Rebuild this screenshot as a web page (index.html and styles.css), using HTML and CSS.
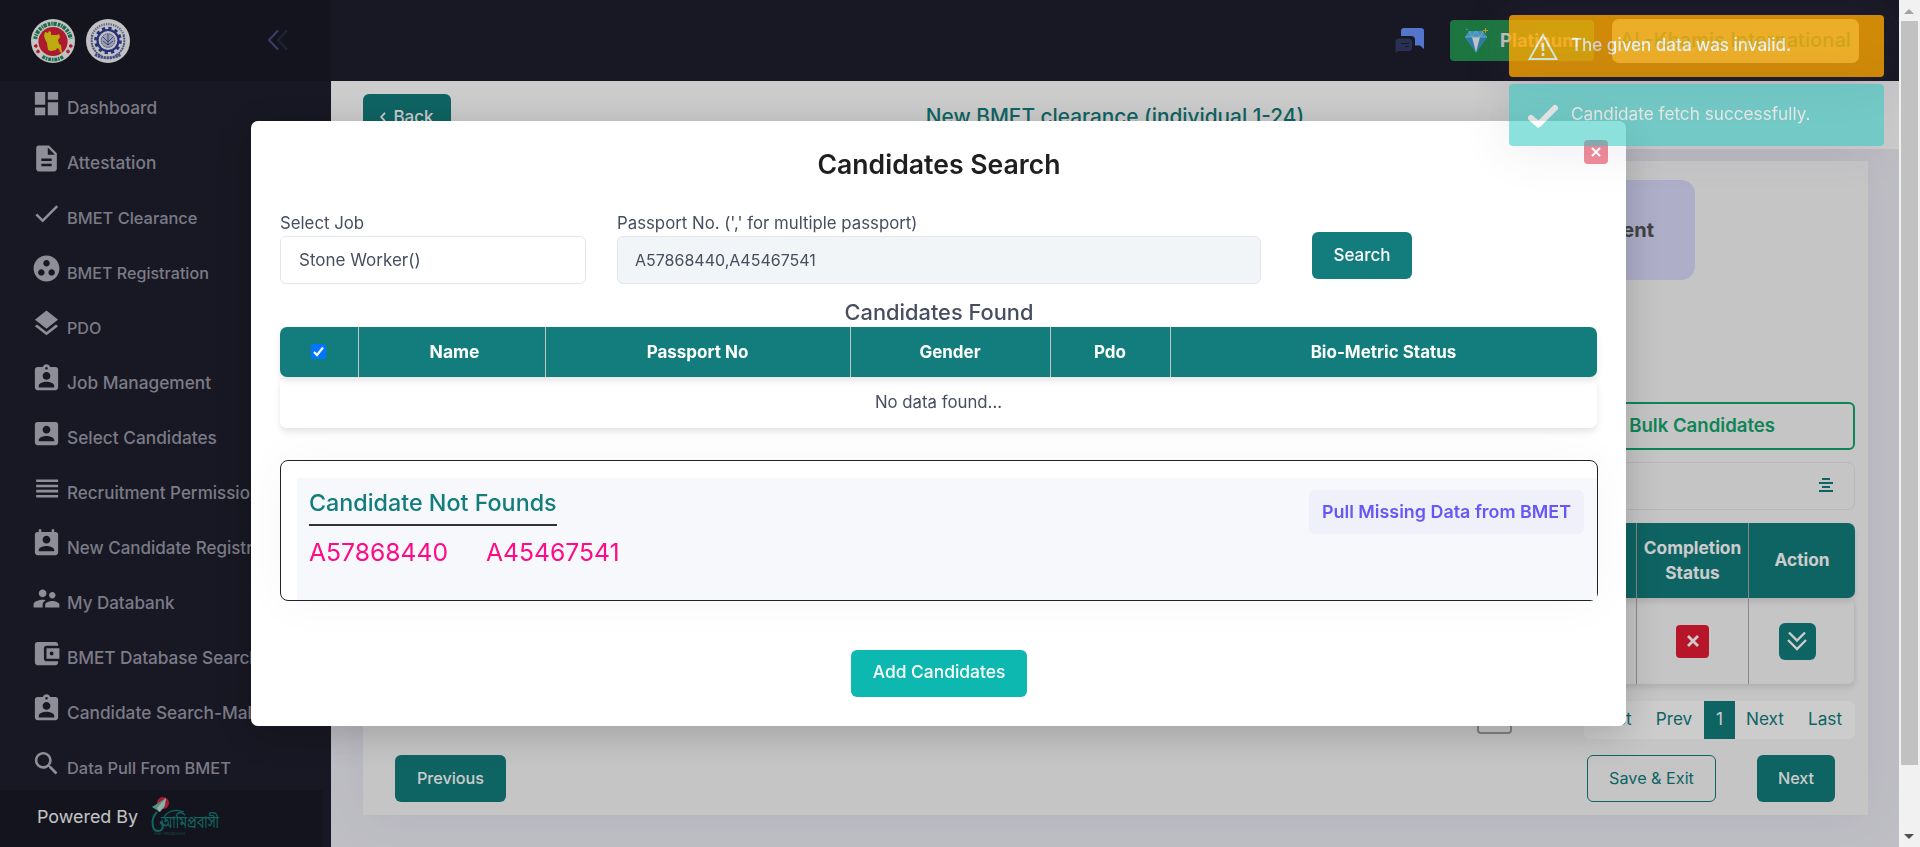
FILE: index.html
```html
<!DOCTYPE html>
<html lang="en">
<head>
<meta charset="utf-8">
<title>New BMET clearance</title>
<link rel="stylesheet" href="styles.css">
</head>
<body>
<div class="app">
  <aside class="sidebar">
    <div class="brand">
      <svg class="seal" viewBox="0 0 44 44">
        <circle cx="22" cy="22" r="22" fill="#f4f4f2"/>
        <path d="M4.2 20A18 18 0 0 1 39.8 20" fill="none" stroke="#1f8a63" stroke-width="4" stroke-dasharray="2.6 .9 1.4 .7 3.4 1.1"/>
        <path d="M11.5 37.5A19 19 0 0 0 32.5 37.5" fill="none" stroke="#1f8a63" stroke-width="3.6" stroke-dasharray="3 .8 1.6 .8"/>
        <circle cx="22" cy="22.5" r="14.6" fill="#d92139"/>
        <path d="M14 13l3 1 1-2 2 1v3h6l2-1 1 3-2 3 1 4 2 1 1 8-2-1-1-3-2-1-1 2-5 1-3-1-1-7-2-4-1-3z" fill="#ecd815"/>
        <path d="M3 27h3.500M5 25.200v3.600M5.200 32.500h3.600M7 30.700v3.600M38 27h3.500M39.700 25.200v3.600M35.200 32.500h3.600M37 30.700v3.600" stroke="#d92139" stroke-width="1.800"/>
      </svg>
      <svg class="seal" viewBox="0 0 44 44">
        <circle cx="22" cy="22" r="22" fill="#f2f2f2"/>
        <path d="M5.800 17A17 17 0 0 1 38.200 17" fill="none" stroke="#7b82b4" stroke-width="2.200" stroke-dasharray="1.400 1"/>
        <path d="M6.500 16C4 24 7 33 15 36.500M37.500 16C40 24 37 33 29 36.500" fill="none" stroke="#5d66a8" stroke-width="2" stroke-dasharray="2 .6"/>
        <path d="M9 35.500Q22 42 35 35.500" fill="none" stroke="#5660a6" stroke-width="3" stroke-dasharray="2.400 .6"/>
        <circle cx="22" cy="21.500" r="12.200" fill="none" stroke="#2f3c94" stroke-width="3.200" stroke-dasharray="3.200 3.187"/>
        <circle cx="22" cy="21.500" r="10.500" fill="none" stroke="#2f3c94" stroke-width="2.200"/>
        <circle cx="22" cy="21.500" r="6.800" fill="#c4c7dc" stroke="#5660a6" stroke-width="1" stroke-dasharray="1.500 .7"/>
        <path d="M22 15v11M17 22l5 4 5-4M17 18l5 5 5-5" stroke="#3d4899" stroke-width=".9" fill="none"/>
      </svg>
      <svg class="collapse" viewBox="0 0 20 20" fill="none" stroke-width="2" stroke-linecap="round" stroke-linejoin="round">
        <path d="M10 1L1.500 10 10 19" stroke="#4d4d80"/><path d="M19 1l-8.500 9L19 19" stroke="#2c2c48"/>
      </svg>
    </div>
    <ul class="menu">
      <li><svg viewBox="0 0 24 24"><path d="M3 13h8V3H3v10zm0 8h8v-6H3v6zm10 0h8V11h-8v10zm0-18v6h8V3h-8z"/></svg><span>Dashboard</span></li>
      <li><svg viewBox="0 0 24 24"><path d="M14 2H6c-1.100 0-1.990.9-1.990 2L4 20c0 1.100.890 2 1.990 2H18c1.100 0 2-.9 2-2V8l-6-6zm2 16H8v-2h8v2zm0-4H8v-2h8v2zm-3-5V3.500L18.500 9H13z"/></svg><span>Attestation</span></li>
      <li><svg viewBox="0 0 24 24"><path d="M9 16.170L4.830 12l-1.420 1.410L9 19 21 7l-1.410-1.410z"/></svg><span class="caps">BMET Clearance</span></li>
      <li><svg viewBox="0 0 24 24"><path d="M12 2C6.480 2 2 6.480 2 12s4.480 10 10 10 10-4.480 10-10S17.520 2 12 2zM8 17.500c-1.380 0-2.500-1.120-2.500-2.500s1.120-2.500 2.500-2.500 2.500 1.120 2.500 2.500-1.120 2.500-2.500 2.500zM9.500 8c0-1.380 1.120-2.500 2.500-2.500s2.500 1.120 2.500 2.500-1.120 2.500-2.500 2.500S9.500 9.380 9.500 8zm6.500 9.500c-1.380 0-2.500-1.120-2.500-2.500s1.120-2.500 2.500-2.500 2.500 1.120 2.500 2.500-1.120 2.500-2.500 2.500z"/></svg><span class="caps tight">BMET Registration</span></li>
      <li><svg viewBox="0 0 24 24"><path d="M11.990 18.540l-7.370-5.730L3 14.070l9 7 9-7-1.630-1.270-7.380 5.740zM12 16l7.360-5.730L21 9l-9-7-9 7 1.630 1.270L12 16z"/></svg><span class="caps tight">PDO</span></li>
      <li><svg viewBox="0 0 24 24"><path d="M19 3h-4.180C14.400 1.840 13.300 1 12 1c-1.300 0-2.400.840-2.820 2H5c-1.100 0-2 .9-2 2v14c0 1.100.9 2 2 2h14c1.100 0 2-.9 2-2V5c0-1.100-.9-2-2-2zm-7 0c.550 0 1 .450 1 1s-.450 1-1 1-1-.450-1-1 .450-1 1-1zm0 4c1.660 0 3 1.340 3 3s-1.340 3-3 3-3-1.340-3-3 1.340-3 3-3zm6 12H6v-1.400c0-2 4-3.100 6-3.100s6 1.100 6 3.100V19z"/></svg><span>Job Management</span></li>
      <li><svg viewBox="0 0 24 24"><path d="M3 5v14c0 1.100.890 2 2 2h14c1.100 0 2-.9 2-2V5c0-1.100-.9-2-2-2H5c-1.110 0-2 .9-2 2zm12 4c0 1.660-1.340 3-3 3s-3-1.340-3-3 1.340-3 3-3 3 1.340 3 3zm-9 8c0-2 4-3.100 6-3.100s6 1.100 6 3.100v1H6v-1z"/></svg><span>Select Candidates</span></li>
      <li><svg viewBox="0 0 24 24"><path d="M4 15h17v-2H4v2zm0 4h17v-2H4v2zm0-8h17V9H4v2zm0-6v2h17V5H4z"/></svg><span class="mid">Recruitment Permission</span></li>
      <li><svg viewBox="0 0 24 24"><path d="M19 3h-1V1h-2v2H8V1H6v2H5c-1.110 0-2 .9-2 2v14c0 1.100.890 2 2 2h14c1.100 0 2-.9 2-2V5c0-1.100-.9-2-2-2zm-7 3c1.660 0 3 1.340 3 3s-1.340 3-3 3-3-1.340-3-3 1.340-3 3-3zm6 12H6v-1c0-2 4-3.100 6-3.100s6 1.100 6 3.100v1z"/></svg><span class="mid">New Candidate Registration</span></li>
      <li><svg viewBox="0 0 24 24"><path d="M16.500 12c1.380 0 2.490-1.120 2.490-2.500S17.880 7 16.500 7C15.120 7 14 8.120 14 9.500s1.120 2.500 2.500 2.500zM9 11c1.660 0 2.990-1.340 2.990-3S10.660 5 9 5C7.340 5 6 6.340 6 8s1.340 3 3 3zm7.500 3c-1.830 0-5.500.920-5.500 2.750V19h11v-2.250c0-1.830-3.670-2.750-5.500-2.750zM9 13c-2.330 0-7 1.170-7 3.500V19h7v-2.250c0-.850.330-2.340 2.370-3.470C10.500 13.100 9.660 13 9 13z"/></svg><span class="mid">My Databank</span></li>
      <li><svg viewBox="0 0 24 24"><path d="M21 18v1c0 1.100-.9 2-2 2H5c-1.110 0-2-.9-2-2V5c0-1.100.890-2 2-2h14c1.100 0 2 .9 2 2v1h-9c-1.110 0-2 .9-2 2v8c0 1.100.890 2 2 2h9zm-9-2h10V8H12v8zm4-2.500c-.830 0-1.500-.670-1.500-1.500s.670-1.500 1.500-1.500 1.500.670 1.500 1.500-.670 1.500-1.500 1.500z"/></svg><span class="db">BMET Database Search</span></li>
      <li><svg viewBox="0 0 24 24"><path d="M19 3h-4.180C14.400 1.840 13.300 1 12 1c-1.300 0-2.400.840-2.820 2H5c-1.100 0-2 .9-2 2v14c0 1.100.9 2 2 2h14c1.100 0 2-.9 2-2V5c0-1.100-.9-2-2-2zm-7 0c.550 0 1 .450 1 1s-.450 1-1 1-1-.450-1-1 .450-1 1-1zm0 4c1.660 0 3 1.340 3 3s-1.340 3-3 3-3-1.340-3-3 1.340-3 3-3zm6 12H6v-1.400c0-2 4-3.100 6-3.100s6 1.100 6 3.100V19z"/></svg><span>Candidate Search-Malaysia</span></li>
      <li><svg viewBox="0 0 24 24"><path d="M15.500 14h-.790l-.280-.270C15.410 12.590 16 11.110 16 9.500 16 5.910 13.090 3 9.500 3S3 5.910 3 9.500 5.910 16 9.500 16c1.610 0 3.090-.590 4.230-1.570l.270.280v.790l5 4.990L20.490 19l-4.990-5zm-6 0C7.010 14 5 11.990 5 9.500S7.010 5 9.500 5 14 7.010 14 9.500 11.990 14 9.500 14z"/></svg><span class="caps">Data Pull From BMET</span></li>
    </ul>
    <div class="powered">
      <span>Powered By</span>
      <svg class="probashi" viewBox="0 0 70 42">
        <circle cx="12" cy="8" r="6" fill="#d8203c"/>
        <path d="M1 12L15 3l-1 8-5 6z" fill="#6fb5a6"/><path d="M15 3l-2 9-5 5-2-4z" fill="#b6ddd4"/>
        <path d="M6 17C-1 24 1 36 7 36s6-7 2-9" fill="none" stroke="#14807c" stroke-width="2"/>
        <path d="M13 22Q20 12 33 17" fill="none" stroke="#14807c" stroke-width="1.200"/>
        <text class="bn" x="10" y="33" textLength="58" lengthAdjust="spacingAndGlyphs">আমিপ্রবাসী</text>
        <text class="bn-sub" x="3" y="40" textLength="31">AMI PROBASHI</text>
      </svg>
    </div>
  </aside>

  <main class="main">
    <header class="topbar">
      <svg class="chat" viewBox="0 0 30 26"><path d="M9 1h17a3 3 0 0 1 3 3v18l-4-3.500h-5V13a4 4 0 0 0-4-4H6V4a3 3 0 0 1 3-3z" fill="#6993ff"/><path d="M3 11.500h11a3 3 0 0 1 3 3V21a3 3 0 0 1-3 3H4l-3.500 2V14.500a3 3 0 0 1 2.500-3z" fill="#323e68"/><path d="M6 16.500h8M10 19.500h4" stroke="#1e1e2d" stroke-width="1.200"/></svg>
      <div class="plan">
        <svg viewBox="0 0 24 25"><path d="M5 3h14l4 6-11 15.500L1 9z" fill="#55b9ea"/><path d="M1 9h22L12 24.500z" fill="#3d9bd2"/><path d="M8 9h8l-4 15.500z" fill="#f1f6fb"/><path d="M5 3l3 6 4-6 4 6 3-6M1 9h22" fill="none" stroke="#8fd6f6" stroke-width=".9"/><path d="M21.500 0v5M19 2.500h5" stroke="#f5bd3a"/><path d="M2 1.500h2" stroke="#55b9ea"/></svg>
        <span>Platinum</span>
      </div>
      <div class="agency">AL-Khamis International</div>
    </header>
    <div class="subheader">
      <button class="btn back"><svg viewBox="0 0 6 10" fill="none" stroke="#fff" stroke-width="1.800"><path d="M5 .8L1.200 5 5 9.200"/></svg>Back</button>
      <h1 class="page-title">New BMET clearance (individual 1-24)</h1>
    </div>
    <section class="card">
      <div class="steps"><div class="step">Document</div></div>
      <div class="bulk-row"><div class="bulk">Bulk Candidates</div></div>
      <div class="filter"><svg viewBox="0 0 14 14" stroke="#127d7c" stroke-width="2"><path d="M3 1h8M0 5h14M3 9h8M0 13h14"/></svg></div>
      <div class="grid">
        <div class="grid-head"><div></div><div>Completion Status</div><div>Action</div></div>
        <div class="grid-body">
          <div></div>
          <div><span class="flag"><svg viewBox="0 0 12 12" stroke="#fff" stroke-width="2.800"><path d="M1 1l10 10M11 1L1 11"/></svg></span></div>
          <div><span class="expand"><svg viewBox="0 0 20 20" fill="none" stroke="#fff" stroke-width="2.400"><path d="M2 1.500l8 8 8-8M1 9l9 9 9-9"/></svg></span></div>
        </div>
      </div>
      <div class="pager">
        <span class="page-size"></span>
        <div class="pages"><span>First</span><span>Prev</span><span class="on">1</span><span>Next</span><span>Last</span></div>
      </div>
      <div class="wizard">
        <button class="btn prev">Previous</button>
        <button class="btn outline">Save &amp; Exit</button>
        <button class="btn next">Next</button>
      </div>
    </section>
  </main>
</div>

<div class="scrim"></div>

<div class="modal">
  <button class="close"><svg viewBox="0 0 10 10" stroke="#fff" stroke-width="2.200"><path d="M1 1l8 8M9 1L1 9"/></svg></button>
  <h2 class="modal-title">Candidates Search</h2>
  <div class="form">
    <label class="job">Select Job<span class="field">Stone Worker()</span></label>
    <label class="pass">Passport No. (',' for multiple passport)<span class="field filled">A57868440,A45467541</span></label>
    <button class="btn search">Search</button>
  </div>
  <h3 class="found-title">Candidates Found</h3>
  <div class="found">
    <div class="found-head">
      <div><span class="check"><svg viewBox="0 0 15 15" fill="none" stroke="#fff" stroke-width="2.200"><path d="M3 8l3 3 6-7.500"/></svg></span></div>
      <div class="name">Name</div><div>Passport No</div><div>Gender</div><div>Pdo</div><div>Bio-Metric Status</div>
    </div>
    <div class="found-body">No data found...</div>
  </div>
  <div class="missing">
    <div class="missing-inner">
      <div>
        <h3 class="missing-title">Candidate Not Founds</h3>
        <div class="codes"><span>A57868440</span><span>A45467541</span></div>
      </div>
      <button class="pull">Pull Missing Data from BMET</button>
    </div>
  </div>
  <button class="btn add">Add Candidates</button>
</div>

<div class="toasts">
  <div class="toast warning">
    <svg viewBox="0 0 30 28" fill="none" stroke="#fff" stroke-width="2"><path d="M15 2L28.500 26h-27z"/><path d="M15 10v8M15 20v3" stroke-width="2.600"/></svg>
    <span>The given data was invalid.</span>
  </div>
  <div class="toast success">
    <svg viewBox="0 0 30 24" fill="none" stroke="#fff" stroke-width="6" stroke-linecap="round"><path d="M3 14l7.500 6.500L27 4" stroke-linejoin="round"/></svg>
    <span>Candidate fetch successfully.</span>
  </div>
</div>

<div class="scrollbar"><i class="up"></i><i class="thumb"></i><i class="down"></i></div>
</body>
</html>
```
FILE: styles.css
```css
* { box-sizing: border-box; }
body {
  margin: 0;
  height: 847px;
  overflow: hidden;
  background: #eeeef5;
  color: #464e5f;
  font: 400 16px/24px Inter, "Noto Sans", sans-serif;
}
h1, h2, h3, ul { margin: 0; padding: 0; font-weight: 500; }
button { font: inherit; border: 0; padding: 0; }
.app { display: grid; grid-template-columns: 331px 1568px; height: 847px; }

/* Sidebar */
.sidebar { background: #1e1e2d; display: flex; flex-direction: column; overflow: hidden; }
.brand { height: 81px; background: #1a1a27; display: flex; align-items: center; gap: 11px; padding: 0 43px 0 31px; flex: none; }
.seal { width: 44px; height: 44px; }
.collapse { width: 21px; height: 20px; margin-left: auto; margin-top: -1px; }
.menu { list-style: none; height: 709px; flex: none; overflow: hidden; }
.menu li { height: 55px; padding: 0 0 2px 31px; display: flex; align-items: center; gap: 5px; white-space: nowrap; font-size: 17.3px; }
.menu svg { width: 31px; height: 31px; fill: #b2b2bf; margin-top: -9px; flex: none; }
.menu .caps { font-size: 16.4px; }
.menu .tight { font-size: 16.1px; }
.menu .mid { font-size: 17px; }
.menu .db { font-size: 17.3px; letter-spacing: -.08px; }
.menu span { color: #9a9aa8; }
.powered { height: 57px; width: 323px; background: #1a1a27; display: flex; align-items: center; gap: 13px; padding: 0 0 3px 37px; color: #f4f4f6; font-size: 17.9px; }
.probashi { width: 70px; height: 42px; margin-top: -3px; overflow: visible; }
.bn { font: 17px "Noto Sans Bengali", FreeSans, sans-serif; fill: #14807c; }
.bn-sub { font: 4px Inter, sans-serif; fill: #14605e; }

/* Header */
.main { overflow: hidden; }
.topbar { height: 81px; background: #1e1e2d; display: flex; padding: 19px 40px 0 0; justify-content: flex-end; }
.chat { width: 30px; height: 26px; margin: 8px 25px 0 0; }
.plan { width: 144px; height: 41px; margin: 1px 18px 0 0; border-radius: 4px; background: linear-gradient(90deg, #239350, #289c55); display: flex; align-items: center; gap: 12px; padding-left: 14px; color: #f4f4f4; font-weight: 700; font-size: 18.400px; }
.plan svg { width: 24px; height: 25px; }
.plan span { margin-top: -2px; }
.agency { width: 247px; height: 44px; border-radius: 7px; background: #c9f7f5; color: #1bb9a8; font-weight: 500; font-size: 20.200px; line-height: 42px; text-align: center; white-space: nowrap; }
.subheader { height: 68px; background: #fff; padding: 13px 0 0 32px; display: flex; position: relative; }
.page-title { position: absolute; left: 0; right: 0; top: 24px; text-align: center; color: #127d7c; font-size: 20.800px; }

.btn { height: 47px; padding: 0 21px 2px; border-radius: 6px; background: #127d7c; color: #fff; font-weight: 500; font-size: 16.200px; }
.back { width: 88px; padding: 0 0 2px; font-size: 17px; display: flex; align-items: center; justify-content: center; gap: 7px; }
.back svg { width: 6px; height: 10px; }

/* Content card */
.card { margin: 12px 0 0 32px; width: 1505px; height: 654px; padding: 19px 13px 0; background: #f7f7f8; box-shadow: 0 0 50px rgba(82, 63, 145, .08); }
.steps { display: flex; justify-content: flex-end; padding-right: 160px; height: 222px; }
.step { width: 190px; height: 100px; border-radius: 14px; background: #dadafc; color: #525252; font-weight: 700; font-size: 20px; line-height: 100px; text-align: right; padding-right: 41px; }
.bulk-row { height: 60px; }
.bulk { height: 48px; border: 2px solid #12a66d; border-radius: 6px; color: #12a66d; font-weight: 600; font-size: 18.600px; line-height: 43px; text-align: right; padding-right: 78px; }
.filter { height: 48px; border: 1px solid #e4e4ea; border-radius: 7px; display: flex; justify-content: flex-end; align-items: center; padding-right: 21px; }
.filter svg { width: 14px; height: 14px; margin-top: -3px; }
.grid { margin-top: 13px; }
.grid-head, .grid-body { display: grid; grid-template-columns: 1fr 112px 107px; text-align: center; border-radius: 7px; box-shadow: 0 4px 6px rgba(0, 0, 0, .1); }
.grid-head { height: 75px; background: #127d7c; color: #fff; font-weight: 700; font-size: 17.300px; line-height: 25px; align-items: stretch; }
.grid-head > div, .grid-body > div { display: flex; align-items: center; justify-content: center; border-left: 1px solid #a9a9ac; }
.grid-head > div { padding-bottom: 2px; }
.grid-head > div:first-child, .grid-body > div:first-child { border-left: 0; }
.grid-body { height: 86px; box-shadow: 0 4px 6px rgba(0, 0, 0, .1), inset -1px 0 #e6e6e8; }
.flag { width: 33px; height: 33px; border-radius: 4px; background: #e51b35; display: grid; place-items: center; }
.flag svg { width: 12px; height: 12px; }
.expand { width: 37px; height: 37px; border-radius: 6px; background: #127d7c; display: grid; place-items: center; margin-right: 10px; }
.expand svg { width: 20px; height: 20px; }
.pager { margin-top: 17px; height: 38px; display: flex; justify-content: flex-end; gap: 72px; }
.page-size { width: 35px; height: 33px; border: 2px solid #a2a2a5; border-radius: 4px; }
.pages { width: 271px; display: flex; border-radius: 6px; background: #fff; color: #127d7c; font-size: 17.200px; line-height: 36px; }
.pages span { width: 60px; text-align: center; }
.pages .on { width: 31px; background: #127d7c; color: #fff; }
.wizard { margin-top: 16px; padding: 0 20px 0 19px; display: flex; }
.wizard .prev { width: 111px; padding: 0 0 2px; }
.wizard .outline { margin-left: auto; width: 129px; padding: 0 0 2px; background: none; border: 1px solid #127d7c; color: #127d7c; font-weight: 400; }
.wizard .next { margin-left: 41px; width: 78px; padding: 0 0 2px; }

.scrim { position: fixed; inset: 0; background: rgba(0, 0, 0, .2); }

/* Candidate search dialog */
.modal { position: fixed; left: 251px; top: 121px; width: 1375px; height: 605px; padding: 0 28px 0 29px; border-radius: 7px; background: #fff; box-shadow: 0 8px 40px rgba(0, 0, 0, .2); overflow: hidden; }
.close { position: absolute; top: 19px; right: 18px; width: 24px; height: 24px; border-radius: 4px; background: #f08c9a; display: grid; place-items: center; }
.close svg { width: 10px; height: 10px; }
.modal-title { height: 90px; line-height: 86px; text-align: center; font-size: 26.600px; font-weight: 600; color: #1f1f1f; }
.form { display: grid; grid-template-columns: 306px 644px 100px; column-gap: 31px; }
.form label { font-size: 16.800px; line-height: 25px; }
.field { display: block; height: 48px; border: 1px solid #e4e6ef; border-radius: 6px; padding-left: 18px; line-height: 46px; font-size: 17px; }
.filled { background: #f2f5f8; line-height: 47px; font-size: 16px; padding-left: 17px; }
.search { margin: 21px -20px 0 20px; padding: 0 0 2px; font-size: 17px; }
.found-title { margin-top: 14px; height: 29px; text-align: center; font-size: 21.800px; line-height: 28px; }
.found { width: 1317px; }
.found-head, .found-body { border-radius: 7px; box-shadow: 0 4px 6px rgba(0, 0, 0, .1); }
.found-head { height: 50px; display: grid; grid-template-columns: 78px 187px 305px 200px 120px 1fr; background: #127d7c; color: #fff; font-size: 17px; font-weight: 700; }
.found-head > div { display: flex; align-items: center; justify-content: center; border-left: 1px solid #bcc9c9; padding: 0 1px 1px 0; }
.found-head .name { padding-left: 6px; font-size: 17.5px; }
.found-head > div:first-child { border: 0; }
.check { width: 15px; height: 15px; border-radius: 2px; background: #0075ff; display: flex; }
.found-body { height: 51px; line-height: 51px; text-align: center; font-size: 16.800px; }
.missing { margin-top: 32px; height: 141px; padding: 17px 0 0 16px; border: 1px solid #222; border-radius: 8px; box-shadow: 0 0 50px rgba(0, 0, 0, .04); }
.missing-inner { height: 122px; background: #f7f8fc; padding: 12px 13px 0 12px; display: flex; justify-content: space-between; }
.missing-title { color: #127d7c; border-bottom: 2px solid #333; font-size: 23.300px; line-height: 26px; height: 36px; display: inline-block; }
.codes { display: flex; gap: 38px; margin-top: 10px; color: #ff0a87; font-size: 24.700px; line-height: 32px; }
.pull { width: 275px; height: 44px; border-radius: 6px; background: #f0f0fb; color: #6658f5; font-weight: 600; font-size: 17.900px; line-height: 42px; white-space: nowrap; }
.add { display: block; width: 176px; margin: 49px auto 0; padding: 0 0 3px; background: #0db8b1; font-size: 17.400px; }

/* Notifications */
.toasts { position: fixed; top: 15px; left: 1509px; width: 375px; display: grid; gap: 7px; }
.toast { height: 62px; border-radius: 4px; display: flex; align-items: center; gap: 13px; padding-left: 19px; color: #fff; font-size: 17.200px; box-shadow: 0 0 50px rgba(82, 63, 105, .25); }
.toast svg { width: 30px; height: 28px; margin-top: 1px; }
.toast span { margin-top: -2px; }
.warning { background: #ffa800; opacity: .8; font-weight: 500; font-size: 17px; }
.success { background: #1bc5bd; opacity: .5; }

/* Scrollbar */
.scrollbar { position: fixed; left: 1899px; top: 0; width: 21px; height: 847px; background: #f1f1f1; display: flex; flex-direction: column; align-items: center; padding: 9px 2px 8px 1px; }
.scrollbar i { display: block; }
.up { border: 5px solid transparent; border-top: 0; border-bottom: 5px solid #a3a3a3; }
.thumb { width: 17px; height: 744px; margin-top: 7px; background: #c1c1c1; }
.down { margin-top: auto; border: 5px solid transparent; border-bottom: 0; border-top: 5px solid #505050; }
```
